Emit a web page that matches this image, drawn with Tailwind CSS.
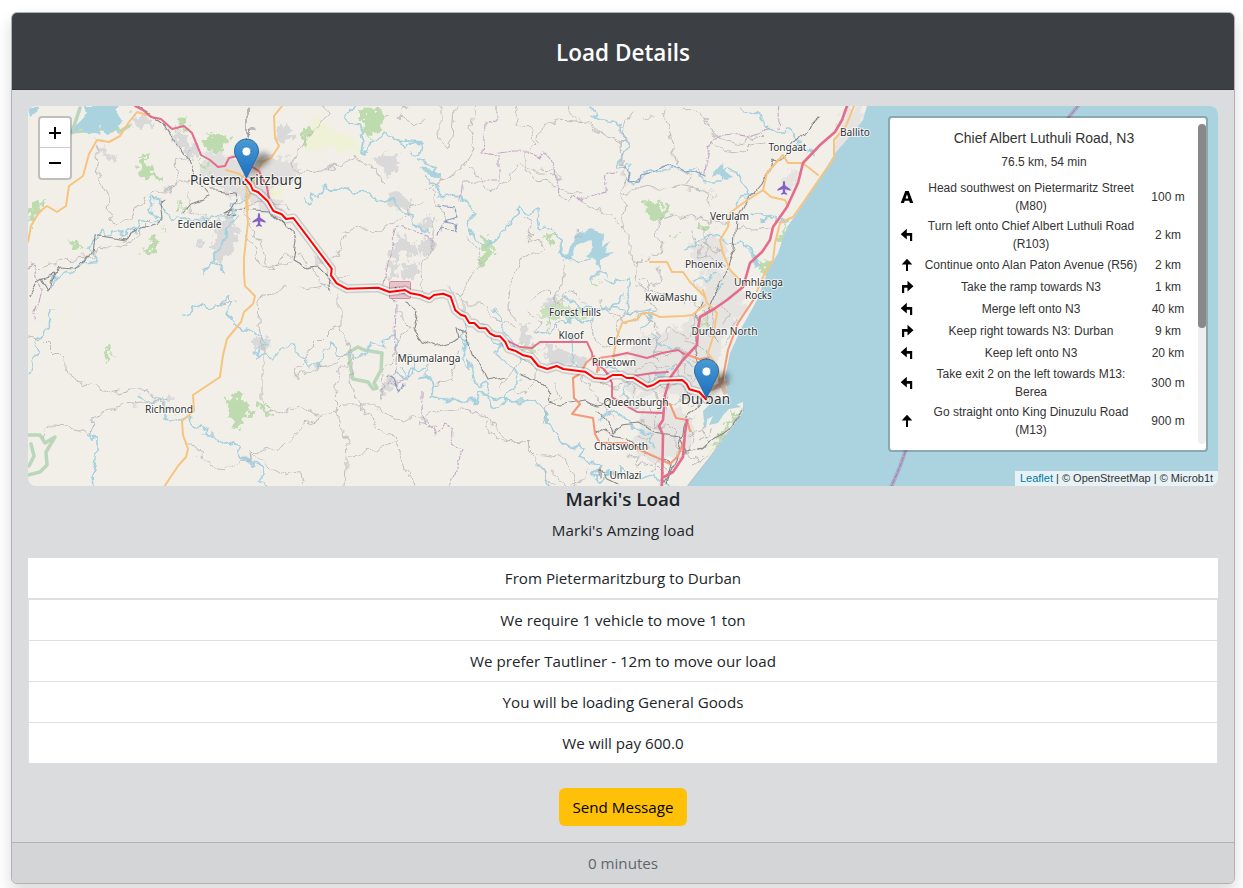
<!DOCTYPE html>
<html lang="en">
<head>
<meta charset="utf-8">
<title>Load Details</title>
<script src="https://cdn.jsdelivr.net/npm/@tailwindcss/browser@4"></script>
</head>
<body class="bg-white h-[888px] overflow-hidden px-[8px] pt-3 pl-[11px] font-['Open_Sans',sans-serif] text-[15.150px] text-[#212529]">
<main class="flex flex-col w-[1224px] h-[872px] rounded-md border border-[#b0b2b4] bg-[#dadcde] overflow-hidden text-center shadow-[0_8px_16px_rgba(0,0,0,0.15)]">
  <header class="h-[77px] shrink-0 bg-[#3c4044] border-b border-[#33353d] flex items-center justify-center text-white font-semibold">
    <h1 class="text-[22.500px] leading-7 pt-[3px]">Load Details</h1>
  </header>
  <section class="px-4 pt-4 h-[752px] shrink-0">
    <div class="relative h-[380px] w-[1190px] rounded-lg overflow-hidden bg-[#f2efe9]">
      <svg class="block" width="1190" height="380" viewBox="28 106 1190 380" fill="none" stroke-linejoin="round" stroke-linecap="round">
        <defs>
          <linearGradient id="pinFill" x1="0" y1="0" x2="0" y2="1"><stop offset="0" stop-color="#4a9ad4"/><stop offset="1" stop-color="#1a6fc0"/></linearGradient>
          <filter id="soft" x="-50%" y="-50%" width="200%" height="200%"><feGaussianBlur stdDeviation="3"/></filter>
          <!-- natural irregularity for banks, tracks and woodland edges -->
          <filter id="wiggle" filterUnits="userSpaceOnUse" x="28" y="106" width="1190" height="380" color-interpolation-filters="sRGB"><feTurbulence type="fractalNoise" baseFrequency=".09" numOctaves="2" seed="4"/><feDisplacementMap in="SourceGraphic" scale="13" xChannelSelector="R" yChannelSelector="G"/></filter>
          <filter id="ragged" filterUnits="userSpaceOnUse" x="28" y="106" width="1190" height="380" color-interpolation-filters="sRGB"><feTurbulence type="fractalNoise" baseFrequency=".14" numOctaves="3" seed="9"/><feDisplacementMap in="SourceGraphic" scale="18" xChannelSelector="R" yChannelSelector="G"/></filter>
          <filter id="bend" filterUnits="userSpaceOnUse" x="28" y="106" width="1190" height="380" color-interpolation-filters="sRGB"><feTurbulence type="fractalNoise" baseFrequency=".06" numOctaves="2" seed="2"/><feDisplacementMap in="SourceGraphic" scale="10" xChannelSelector="R" yChannelSelector="G"/></filter>
          <g id="pin">
            <path d="M13 39 L22 17 Q37 10 35 22 Z" fill="#000" opacity=".45" filter="url(#soft)"/>
            <path d="M12.500 .5C5.800 .5 .5 5.800 .5 12.400c0 3 1.100 5.200 2.300 7.600L12.500 39.500 22.200 20c1.200-2.400 2.300-4.600 2.300-7.600C24.500 5.800 19.200 .5 12.500 .5Z" fill="url(#pinFill)" stroke="#2e6c97" stroke-width="1"/>
            <circle cx="12.500" cy="13" r="4.500" fill="#fff" stroke="#2f78b3" stroke-width=".7"/>
          </g>
          <path id="plane" d="M0 -7C1 -7 1.200 -5 1.200 -2.500L6.500 1.300V2.800L1.200 1.200V4.300L3 5.700V6.800L0 6 -3 6.800V5.700L-1.200 4.300V1.200L-6.500 2.800V1.300L-1.200 -2.500C-1.200 -5 -1 -7 0 -7Z" fill="#8461c4"/>
          <path id="route" d="M245.700 179.300l5 5.700 2 5 5.600 2.300 9.400 9 5.700 9.700 8.300 3.300 4.300 4.700 7.400 -1 38.300 50.700 -.7 6.600 5.700 8 10 5.400 31.600 -1 11 4.300 15.700 -2 5.700 3.300 9.300 1.700 9.300 3.700 4.700 -3.700 9.300 -1.300 7.400 3 4.600 13.600 5.400 4.400 4.600 1.600 4 6.700h5l5 5 6.700 .3 4 5 5 2.700 5 .3 5.300 5.700 3 6.700 6.700 2 8.300 4.600 7.700 1.700 7.300 9 9 3 9.400 -3 6.600 3 21.700 2.700 9.300 6.300 11.400 1 7 -4h9l5 3h6.600l14 8.700 6 -1.700 6.700 -4.300 22.300 -.7 4.400 4 2.600 5.300 10 2.700 6.700 7.300"/>
        </defs>

        <!-- built-up areas -->
        <g fill="#dad9d9" filter="url(#ragged)">
          <path d="M205 155l12 -6 14 9 20 -2 14 6 8 -7 18 3 10 10 -9 12 -14 4 -4 12 8 9 -6 9 -14 -5 -13 -10 -22 -4 -16 -14 -12 -6Z" opacity=".75"/>
          <path d="M172 130l14 3 6 12 8 8 -6 6 -12 -8 -8 -10ZM277 123l12 3 4 10 -12 8 -5 -9ZM132 115l12 -2 10 10 -12 5 -8 -4ZM96 141l9 8 11 8 -5 5 -12 -9ZM215 222l18 -6 4 14 -4 20 -12 14 -8 -2 1 -18ZM196 240h7v7h-6ZM374 159l14 -6 10 6 0 12 -8 4 -10 -5ZM385 196l12 -6 10 8 5 14 -12 -3 -10 -4Z"/>
          <path d="M398 236l8 -2 4 8 -8 12 -10 8 -2 -10ZM390 262l10 2 -4 14 -8 0ZM404 246l10 -4 4 10 -10 8ZM418 244l14 -8 6 8 -8 10 -10 2ZM402 266l16 -4 2 8 -8 12 -10 -6ZM420 224l10 -10 4 6 -4 12 -8 2ZM313 250l10 7 2 10 -9 -5Z"/>
          <path d="M254 336l15 3 0 11 -8 2 -8 -6ZM382 384l8 -9 6 3 -7 16 -7 -3ZM167 398l5 -2 1 5 -4 2ZM520 325l8 -3 1 14 5 10 -8 6 -7 -9ZM542 348l12 -3 20 13 -8 8 -18 -3ZM566 354l18 2 4 12 -18 -2ZM540 306l14 -12 8 8 -14 9ZM709 198l3 -5 4 5Z"/>
          <path d="M844 106l18 2 4 14 -12 14 -12 14 -8 2 4 -20ZM640 336l36 -6 28 -20 20 12 -4 32 -14 30 -18 16 -34 -8 -22 4 -12 -22ZM692 246l20 -12 16 12 -2 22 -18 6 -18 -8ZM700 280l24 -10 22 14 -2 30 -16 16 -22 -8ZM780 180l12 -10 10 4 -16 22ZM640 412l40 -4 18 20 -12 22 -24 12 -32 -12 8 -20Z" opacity=".5"/>
        </g>

        <!-- woods and reserves -->
        <g fill="#bddbae" filter="url(#ragged)">
          <path d="M139 156l9 -3 0 12 4 9 8 1 1 5 -12 -2 -12 -3 4 -7ZM176 125l7 -11 6 12 -9 4ZM203 138l10 -4 12 0 4 8 -8 12 -12 -4ZM196 160l8 2 7 8 -8 -1ZM363 110l16 -4 5 11 -3 15 -9 5 -9 -9ZM303 128l5 0 2 9 -7 10 -3 -6ZM28 203l19 -2 -9 12 -9 14ZM141 251l6 -3 9 -12 6 5 -7 9 -11 2ZM65 239l8 3 5 -1 6 8 -12 -2ZM162 226l3 2 2 5ZM177 201l6 4 2 5 -6 -2Z"/>
          <path d="M482 240l8 -5 2 12 -1 8 -8 10 -5 -1 5 -8ZM544 234l12 -3 -1 11 -8 3ZM644 200l5 1 12 3 12 11 -13 2 -6 2 -9 -4 2 -5ZM697 223l11 2 6 2 -8 6 -8 -5ZM228 401l12 -10 3 13 11 7 -9 5 -7 16 -9 -14ZM256 403l8 2 9 5 -4 5 -5 -5 -8 -2ZM104 349l5 1 2 10 5 -7 -3 7 -8 4ZM672 234c4 -2 6 2 1 4ZM757 264l10 -4 4 7 -8 9ZM592 280l9 3 -8 3ZM785 222l3 3 -8 17 -3 -1ZM730 420l10 -11 1 4 -28 37 -5 2Z"/>
          <path d="M548 307l14 -4 10 7 10 -3 6 7 -12 6 -12 -4 -16 5 -10 -4ZM520 344l14 3 2 7 -14 -4ZM695 316l14 4 3 10 -11 -5Z" opacity=".75"/>
        </g>
        <g filter="url(#ragged)"><path d="M312 115l14 10 20 10 16 8 -5 14 -12 -6 -18 -5 -25 9 4 -15ZM270 190l10 -4 1 9 -9 4ZM707 449l8 -6 -2 7 -7 5ZM63 315l6 -5 3 4 -7 5Z" fill="#eef3d2" opacity=".8"/></g>
        <g stroke="#6fb57c" stroke-opacity=".42" stroke-width="3.500">
          <path d="M80 108l-4 12 -4 12 11 -1 8 0 15 -3 3 -8 3 11 5 -4 2 5 10 -6" />
          <path d="M349 352l9 -5 6 3 18 3 -1 17 -7 13 3 5 -4 1 -5 -7 -15 -3 -2 -9Z"/>
          <path d="M28 435l12 0 5 8 10 -6 -9 15 1 13 -7 7 -12 3M31 444l3 12 -5 10"/>
        </g>

        <!-- sea, dams and bay -->
        <path d="M867 106l-4 14 -10 13 -18 20 -15 25 -23 35 -10 14 -9 26 -10 17 -6 17 -5 13 -15 27 -12 26 -5 24 3 20 7 8 8 -3 0 10 -13 18 -20 27 -23 29H1218V106Z" fill="#aad3df"/>
        <g fill="#aad3df" filter="url(#bend)">
          <path d="M86 106l2 8 -14 12 -3 9 10 -6 7 4 12 2 2 -12 5 10 10 -3 6 -9 -6 -10 5 -5ZM28 106h12l-1 6 -9 4Z"/>
          <path d="M575 236l14 -6 14 4 -1 12 8 -7 -7 15 10 -1 -12 8 0 9 -6 -10 -7 -4 6 -9 -4 -8 -13 6 -4 10 -6 5 -9 -7 -1 -12 6 13 6 -1ZM420 168l20 3 0 7 -15 -6ZM715 172l7 -9 3 12 6 4 -7 2 -5 -5 -6 2Z"/>
          <path d="M749 253l7 3 6 9 -6 2Z"/>
        </g>
        <path d="M703 411l12 -12 15 1 11 7 -12 2 -5 5 -6 9 -9 2 4 -9 -9 5ZM703 424l5 -10 -2 14Z" fill="#aad3df"/>
        <path d="M744 407l-14 22 -20 28 -22 28" stroke="#c0b9c4" stroke-width=".8"/>
        <g stroke="#a996bd" stroke-width="4" opacity=".6"><path d="M1078 106l-14 17M907 446q-6 20 -16 41"/></g>
        <path d="M1078 106l-14 17M907 446q-6 20 -16 41" stroke="#a777a7" stroke-width="1" stroke-dasharray="4 2"/>

        <!-- rivers -->
        <g stroke="#a5d0df" stroke-width="1.600" filter="url(#wiggle)">
          <path d="M50 289l5 -12 12 -8 8 1 6 -6 13 -1 2 -8 -5 -7 4 -10 9 -7 4 4 9 -4 7 3 8 -4 4 2 4 -12 11 3 8 -2 -2 -7 -8 -6 3 -10 9 2 -3 4 7 8 9 5 6 -1 12 6 12 -1 9 -4 12 1 8 -6 -2 -5 12 -5 7 -10 5 -12"/>
          <path d="M204 271l9 -11 7 -12 7 -16 10 -17M213 260l9 6 3 10" stroke-width="2"/>
          <path d="M355 106l-7 8 2 9 9 6 4 11 -2 13 6 1 5 -13 15 -6 11 3 6 11 9 -7 11 2M400 142l5 -2 15 1 3 6 -3 7 -10 -1M420 160l12 6 4 7M427 176l9 11 5 12 11 -3 12 1 5 10 5 7 -6 8 3 10 6 7 8 9 7 -8 12 -8 10 -14 6 -10 8 5 10 -2 3 15 13 4 5 13 2 10 14 10 16 -5M304 195l5 12 4 -12 7 3 4 -10 13 3 8 -3 10 7 12 -2 10 9 13 -2 9 9 12 7 6 11 10 6" stroke-width="1.800"/>
          <path d="M603 279l10 6 14 -6 3 6 -5 14 6 15M588 106l4 8 10 5 8 3 11 1 1 18 7 5 -7 10 -3 12 11 -2 -4 12 10 6 8 -9 7 0 12 -6 11 -1 12 5 10 -2 9 11 16 0 6 -12 9 1 7 13 8 8 -3 5 -7 1 -5 8M738 106l6 8 9 -1 7 4 7 11 11 4 7 -3 12 8 2 9 14 8"/>
          <path d="M753 214l12 4 -3 4 11 -6 2 6 12 -1M684 252l10 -5 6 -8 9 -4 11 1 11 8 10 -2 12 12 6 9M693 282l6 -4 8 2 9 -7 5 1M722 285l-8 4"/>
          <path d="M53 308l-6 18 -8 15 -6 22 -4 14M183 315l9 -1 8 -10 8 5 12 -4 8 -8 2 7 -4 8 8 9 6 9 12 2 9 4 6 8 -8 5 -4 9 10 -5 10 3 8 -7 10 -2 6 9 10 9 12 1 5 -15 5 -8 8 3 -3 9 8 1 5 -3 7 7 5 -3 8 -5 2 -10 9 5 5 2 -3 -8 10 -4 5 5 -3 8 8 8 9 -4 6 12 -3 7 -7 3 -5 -8"/>
          <path d="M140 397l4 4 10 0 5 -3 5 5 0 15 10 3 8 -4 7 2 3 6 10 -1 6 5 -4 5 10 0 8 8 8 -2 9 10 6 11 10 4 7 5 -4 9 6 6 12 4M91 422l0 11 5 6 0 20 -3 18 1 10"/>
          <path d="M398 374l9 3 5 -8 10 1 5 -4 -2 9M464 326l-2 10 5 9 -4 16 5 11 0 -13 5 20 8 8 5 -6 3 14 2 13 12 -2 3 -11 13 -12 -1 -10 -10 -9 -12 -10 4 -9 -5 -8 -3 -7 -10 -6"/>
          <path d="M420 378l10 -1 4 8 -4 9 9 7 10 -4 13 5 15 -1 2 -8 12 2 16 6 20 -1 14 4 5 8 0 14 9 5 8 6 5 12 12 -4 6 5 -7 9 10 5 6 -4 8 5 -10 10 8 6 12 -9 8 3 0 -8 9 6 14 5 8 -4 10 10 12 4" stroke-width="1.900"/>
          <path d="M590 280l9 -9 8 5M566 298l9 9 13 -1 8 5 11 -4 13 1 12 6 20 -5M535 331l10 2 11 -9 10 -1 10 -6 5 6 13 -4M642 328l9 -7 -2 -8 6 -2M650 333l15 14 12 3 9 12 15 6 10 7M622 292l-3 12 -12 6"/>
          <path d="M495 310l10 13 -3 11 13 10 3 15M600 420l12 -10 14 8 8 12 14 4 6 12M604 362l14 10 9 12 -5 12 10 8M644 386l10 -12 12 0 9 -10 8 2M570 338l4 12 -4 12 8 4M538 466l8 8 5 12"/>
        </g>

        <!-- minor roads -->
        <g stroke="#b9b8b9" stroke-width=".9" filter="url(#wiggle)">
          <path d="M95 145l3 30 11 20 -1 17 6 14 18 -9 5 -13 28 -15 26 -8M28 260l12 8 14 -2 10 -7 30 -3 6 -10 22 3 10 -7 10 -14 8 -8M190 194l0 18 20 8M168 190l10 -6 -3 -22 20 -12M325 106l2 8 -16 20 -14 18 -6 12 9 10 20 -4 24 -7 10 -8 14 11 10 4 4 13M344 232l10 -3 20 2 22 -8 14 -16 14 -3M333 260l15 -27M405 108l-5 12 7 3 18 -1M440 106l0 30 7 16 6 -14 2 -32M474 106l-4 22 4 10 -8 25 -5 10 -22 8 -12 8M469 170l10 8 10 14 12 -10 9 -4 8 -16 10 5 8 5 12 0 12 7 -6 -10 -12 -1M512 106l6 20 13 5 6 12 -10 9 0 18 8 10 14 2 14 10 15 1M540 142l1 -14 18 -8 30 2 16 15 16 7M568 106l4 8 10 6 22 16M633 112l-9 14 -3 20 3 40 -2 12 4 8 -4 18 8 14 0 14 8 17M651 117l-8 1M663 106l5 22 8 36 16 14 -7 8M686 108l20 10 6 16 12 6 20 4 14 -9 10 -10M712 141l11 9 18 3 8 -8 16 -2"/>
          <path d="M580 200l22 11 16 12 4 4M585 235l-10 -2M622 196l16 -9 20 1 26 -1 22 4 3 12M650 255l8 1 6 -15 -10 -6 6 -16 16 -3 22 3 20 5 18 -8M520 222l6 -6 8 10 -6 18 10 -6 6 10 -20 8 -14 30 -4 20 10 12M562 260l2 22 -10 18 -8 30M466 235l18 26 -16 20 -8 18M433 190l4 16 9 10 -4 14M433 218l0 28 -12 20 1 26 12 6M450 284l15 20 0 12M640 255l-4 22 12 20 10 14"/>
          <path d="M28 337l13 2 20 20 15 22 20 5 12 7 24 -4 18 2 10 13 14 8M42 436l8 -10 20 1 20 9 1 -20 30 -10 30 -3 18 -4M186 442l17 14 3 8 21 6 15 -10 7 2 0 -9 35 -6 17 -18 20 -14 14 -3 6 -6 30 0 22 12 30 2 15 6M249 462l-1 -9 9 6 12 9 14 9 4 -5 15 1 2 11M340 291l0 36 10 26 3 40 16 24 24 22 15 32 14 25M260 302l-1 22 3 20 0 60 15 10 24 -9 17 10M340 326l-11 4 -18 18 -12 20 -2 10 14 -9 25 -6 15 -15M336 416l-1 -30 14 -30M381 403l3 -30 9 -22 15 -26 -10 -14M345 486l2 -43 -8 -20 -3 -10M348 462l12 -10 16 -1 18 -10M300 286l12 2 20 -4 16 -10M328 292l-16 -20 -10 -20 -20 13 -20 2 -15 -32M290 254l-22 18 -5 -24 -12 -22 -8 -18 22 -10 25 12M235 302l-20 3M258 304l10 -8 18 -8 0 -4"/>
          <path d="M420 424l15 -12 30 -3 22 7 18 24 20 2 12 20 18 24M487 420l2 14 12 6 22 1M525 442l12 12 30 4 8 28M550 470l18 16 12 -4 8 -12M460 352l-10 28 -14 4M500 388l20 -30 16 6 0 18 -12 12 -8 -6M515 325l-20 -5 -15 -18 -20 0M530 300l16 -8 10 10 20 -12 8 14M555 385l4 12 -12 10 -4 18M590 320l10 24 12 4 8 -8 -6 -18 12 -9 18 2 12 9 2 20 -6 8 14 4 8 -8 12 6M600 300l8 14 20 10 16 -10 18 16M645 346l6 -8 12 4 6 -14 20 10 8 -9 -6 -15"/>
          <path d="M638 374l8 -12 14 6 -6 12 14 9 14 -6 5 12 15 2M660 368l14 -4 12 2 4 12M684 340l16 6 8 12 -8 18 -10 4M640 420l12 6 14 -2 10 10 0 22 12 -2 8 -18 -12 -12 10 -8M596 395l8 16 8 6M622 396l12 12 12 -4 10 12 -4 20 -10 8 4 12M690 296l12 14 6 18 8 10M712 310l4 30M735 320l-8 28M688 435l14 -6 8 14M678 452l22 8M630 452l8 14 14 -2 10 10M694 234l6 14 -2 12 12 -4 14 10M704 230l0 30M712 234l-10 10 22 10M640 276l12 14 10 10 14 -4 8 10M638 262l8 -4M735 228l8 -2 10 4 16 -2"/>
          <path d="M636 284l14 6 12 -8 -4 -14M644 302l14 -10 16 4M600 384l14 4 10 -6 12 6 -4 12M652 390l6 10 14 4 12 -6M668 396l-2 14M690 386l-4 14 10 8M690 358l12 4 6 -8M676 362l4 14M636 436l12 4 -4 14M606 436l8 8 14 2M648 470l12 -6 10 6M700 440l14 -10M692 466l16 -14M722 300l6 14 -4 12M700 330l10 6M658 344l-6 10 8 8M530 312l10 8 -4 12M556 326l10 10M584 372l-2 10 12 8"/>
        </g>

        <!-- municipal boundaries -->
        <g stroke="#c3a8c6" stroke-width="1.100" stroke-dasharray="7 2 1.500 2" filter="url(#bend)">
          <path d="M28 267l6 -3 2 12 7 14 -5 15 -4 13M383 284l6 -30 8 -28 30 8 8 6M497 106l0 12 -12 6 -2 30 16 2 0 25 -37 0 -3 20M499 153l14 -2 14 0 12 7 6 -6 10 12 4 30 10 8 6 -10 8 8 20 -8 2 -16 14 -4M703 172l5 -28 9 -7 15 -3 15 2 22 -9M780 106l-2 24M392 294l5 12 -2 60 -5 20 20 -8M422 394l0 14 4 14 10 12 8 -8 8 4 -1 13 11 6 -8 25 -6 15"/>
        </g>

        <!-- railways -->
        <g stroke="#88888a" stroke-width="1.100" filter="url(#bend)">
          <path d="M138 106l25 18 12 18 14 20 8 22 10 12M209 190l10 0 8 1 8 1 2 8 -4 8 -8 4 10 -3 -8 5 10 2M238 210l30 2 6 4 20 17 2 11 -3 16 14 8 10 -2 10 10 3 12M247 136l0 -30M248 134l3 -4 6 0M28 298l8 -16 17 -7 -4 16 -7 -12M407 300l10 12 -4 16 10 14 12 5 18 -5 6 -4 -2 -11 9 5 9 26 12 23 18 -4M520 373l16 7 15 12 -3 9 13 4 24 -5 14 5 16 -5M597 430l12 5 20 3 22 18 20 7 -5 21M597 410l9 10 7 14 9 -8 16 -2 16 8 26 4 7 16"/>
          <path d="M705 396l-18 22 -10 40 -14 26M684 453l15 -4 10 -9 15 -8 8 -6 10 -16M820 116l-12 12 -13 16 -14 17 -8 -2 -12 24 -18 22 -7 14 -2 30 -6 12 -2 12 -12 20 -8 20M702 302l-6 14 0 34 6 18M184 213l8 -9 16 -6M165 200l-6 2 2 16 -6 6 -25 9 -6 6 -24 -4 -6 2 -2 16 -6 8 -14 8 -12 -1 -10 14M600 478l0 -10 6 10 12 6"/>
        </g>
        <g filter="url(#bend)"><path d="M440 206l12 2 4 8 -10 4 12 2 -3 8 -12 -2 -4 8M624 168l7 6 -2 8 10 -1 2 -6 12 -4 12 -6 8 2 11 5 12 -2 8 4M388 375l6 3 5 14 4 -8" stroke="#8b9cbf" stroke-width="1.200"/></g>

        <!-- secondary roads -->
        <g stroke="#f7c47f" stroke-width="2">
          <path d="M28 242l3 -16 8 -14 8 -6 10 6 9 -6 3 -20 14 -10 6 -22 8 -14 12 2 11 -6 9 -14 8 -10 14 4M282 106l-8 10 1 22 4 8 -8 12 -9 4 -6 12 -3 16 -7 12 2 20 -4 36 0 16 1 12 10 10 -2 8 -9 8 -3 10 -14 17 -4 16 -3 22 -12 8 -15 10 1 16 -12 10 1 14 5 14 -2 8 -8 9 -16 24 -2 10M226 170l14 4 6 8 2 28"/>
          <path d="M854 106l-8 20 -12 14 0 18 -14 20 -13 19 -14 20 -13 6 -5 20 -2 17 -10 17 -6 14M783 155l-16 18 -4 17 -20 13 -13 10 -2 14 -8 13 3 13 7 17 13 13M783 155l5 8h15l15 12M763 190l8 7 14 3 3 6M650 262h17l5 10 11 0 7 10 15 15M703 290l4 13 10 10 -4 24 -5 16 10 14 2 20M705 305l-13 10 -8 1 -24 1 -9 -4 -8 0 -6 6 -15 4 -5 14 -4 22"/>
        </g>
        <path d="M599 370l-5 -14 -8 7 -5 10 -8 5 1 20 6 6 -8 10 21 4 2 16 5 9 26 0 14 7 20 9 10 5 8 -8 6 -15M599 362l-2 10M599 358l20 -3M690 431l-3 -11 -11 -2 -6 -14 -9 -2M682 353l17 6 10 -1M756 296l-18 27 -10 27 -6 33 -12 8" stroke="#f49a79" stroke-width="2.100"/>
        <path d="M721 380l4 12M713 388l14 -5" stroke="#c9a88f" stroke-width="5" opacity=".7"/>

        <!-- motorways -->
        <g stroke="#e46d8b" stroke-width="2">
          <path d="M135 106l8 4 8 7 10 2 11 10 12 -3 8 7 9 22 9 5 8 7 7 -1 4 -8 12 -3 8 10 10 6 8 16 2 12"/>
          <path d="M508 341l12 6 12 1 8 -6 47 0 5 11 1 9 12 8 7 13 0 14 25 15 25 1M613 356l14 -3 20 5 15 -5 16 -3 6 4M633 376l20 -3 15 -1M604 370l6 6M637 412l-14 -8" stroke-width="1.900"/>
          <path d="M847 106l-5 14 -7 12 -15 13 -17 18 -5 20 -11 24 -14 20 -3 13 -8 12 -12 11 -7 24 -16 13 -13 9 -14 8 -2 12 -1 16 -15 16 -12 17 -5 17 -2 25 -4 6 4 9 -1 50 -5 9M687 420l-2 13 -2 24 -10 15 -11 6" stroke-width="2.600"/>
        </g>
        <rect x="389.500" y="281.500" width="21" height="17" rx="1" fill="#eac2cb" stroke="#cc919e"/>
        <text x="400" y="293.500" font-family="'Noto Sans', sans-serif" font-size="9" text-anchor="middle" fill="#7d4a55">N3</text>

        <use href="#plane" x="259" y="220"/>
        <use href="#plane" x="784" y="188"/>

        <!-- place names -->
        <g font-family="'Noto Sans', sans-serif" font-size="10.200" fill="#333" stroke="#fff" stroke-opacity=".7" stroke-width="2" paint-order="stroke" text-anchor="middle">
          <text x="246" y="185" font-size="13.500" textLength="112">Pietermaritzburg</text>
          <text x="199.500" y="227.500" textLength="44">Edendale</text>
          <text x="169" y="412.500" textLength="48">Richmond</text>
          <text x="429" y="362" textLength="63">Mpumalanga</text>
          <text x="787.500" y="150.500" textLength="38">Tongaat</text>
          <text x="855" y="136" textLength="30">Ballito</text>
          <text x="729.500" y="220" textLength="39">Verulam</text>
          <text x="704" y="268" textLength="38">Phoenix</text>
          <text x="758.500" y="286" textLength="49">Umhlanga</text>
          <text x="758.500" y="298.500" textLength="27">Rocks</text>
          <text x="671" y="301" textLength="52">KwaMashu</text>
          <text x="575" y="316" textLength="52">Forest Hills</text>
          <text x="571" y="338.500" textLength="25">Kloof</text>
          <text x="629" y="345" textLength="44">Clermont</text>
          <text x="724.500" y="334.500" textLength="66">Durban North</text>
          <text x="614" y="365.500" textLength="44">Pinetown</text>
          <text x="636" y="405.500" textLength="65">Queensburgh</text>
          <text x="705.500" y="404" font-size="13.500" textLength="49">Durban</text>
          <text x="621" y="450" textLength="54">Chatsworth</text>
          <text x="625.500" y="479" textLength="32">Umlazi</text>
        </g>

        <!-- calculated route -->
        <use href="#route" stroke="#000" stroke-opacity=".15" stroke-width="9"/>
        <use href="#route" stroke="#fff" stroke-opacity=".8" stroke-width="6"/>
        <use href="#route" stroke="#f00" stroke-width="2"/>
        <use href="#pin" x="234" y="138.500"/>
        <use href="#pin" x="694" y="358.500"/>
      </svg>

      <!-- zoom control -->
      <div class="absolute left-[10px] top-[10px] w-[34px] h-[64px] rounded border-2 border-black/20 bg-white bg-clip-padding flex flex-col">
        <button class="h-[30px] border-b border-[#ccc] grid place-items-center"><svg width="12" height="12" viewBox="0 0 12 12"><path d="M0 6h12M6 0v12" stroke="#000" stroke-width="2"/></svg></button>
        <button class="h-[30px] grid place-items-center"><svg width="12" height="12" viewBox="0 0 12 12"><path d="M0 6h12" stroke="#000" stroke-width="2"/></svg></button>
      </div>

      <!-- itinerary -->
      <aside class="absolute left-[860px] top-[10px] w-[320px] h-[336px] rounded border-2 border-black/20 bg-white bg-clip-padding font-['Liberation_Sans',sans-serif] text-[12px] leading-[18px] text-[#333]">
        <h2 class="pt-3 text-[14px] leading-[17px] pl-1 pr-3">Chief Albert Luthuli Road, N3</h2>
        <h3 class="pt-[6px] leading-[18px] pl-1 pr-3">76.5 km, 54 min</h3>
        <div class="mt-[6.500px] pl-[7px] grid grid-cols-[20px_228px_46px]">
          <div class="col-span-3 grid grid-cols-subgrid items-center h-[38px]"><svg class="mx-auto" width="14" height="14" viewBox="0 0 14 14"><path fill-rule="evenodd" d="M.7 13 5.300 1h3.400L13.300 13H9.900L9.200 10.800H4.700L4 13ZM5.500 8.400h2.900L7 4.200Z"/></svg><span>Head southwest on Pietermaritz Street<br>(M80)</span><span>100 m</span></div>
          <div class="col-span-3 grid grid-cols-subgrid items-center h-[38px]"><svg class="mx-auto" width="14" height="14" viewBox="0 0 14 14"><path d="M.7 6.300 6.800 .8V5H12.200v8H10V7.800H6.800V11.500Z"/></svg><span>Turn left onto Chief Albert Luthuli Road<br>(R103)</span><span>2 km</span></div>
          <div class="col-span-3 grid grid-cols-subgrid items-center h-[22px]"><svg class="mx-auto" width="14" height="14" viewBox="0 0 14 14"><path d="M7 .8 12.300 6.500H8V13H6V6.500H1.700Z"/></svg><span>Continue onto Alan Paton Avenue (R56)</span><span>2 km</span></div>
          <div class="col-span-3 grid grid-cols-subgrid items-center h-[22px]"><svg class="mx-auto" width="14" height="14" viewBox="0 0 14 14"><path d="M13.500 6.300 7.500 .8V5H2v8H4.200V7.800H7.500V11.500Z"/></svg><span>Take the ramp towards N3</span><span>1 km</span></div>
          <div class="col-span-3 grid grid-cols-subgrid items-center h-[22px]"><svg class="mx-auto" width="14" height="14" viewBox="0 0 14 14"><path d="M.7 6.300 6.800 .8V5H12.200v8H10V7.800H6.800V11.500Z"/></svg><span>Merge left onto N3</span><span>40 km</span></div>
          <div class="col-span-3 grid grid-cols-subgrid items-center h-[22px]"><svg class="mx-auto" width="14" height="14" viewBox="0 0 14 14"><path d="M13.500 6.300 7.500 .8V5H2v8H4.200V7.800H7.500V11.500Z"/></svg><span>Keep right towards N3: Durban</span><span>9 km</span></div>
          <div class="col-span-3 grid grid-cols-subgrid items-center h-[22px]"><svg class="mx-auto" width="14" height="14" viewBox="0 0 14 14"><path d="M.7 6.300 6.800 .8V5H12.200v8H10V7.800H6.800V11.500Z"/></svg><span>Keep left onto N3</span><span>20 km</span></div>
          <div class="col-span-3 grid grid-cols-subgrid items-center h-[38px]"><svg class="mx-auto" width="14" height="14" viewBox="0 0 14 14"><path d="M.7 6.300 6.800 .8V5H12.200v8H10V7.800H6.800V11.500Z"/></svg><span>Take exit 2 on the left towards M13:<br>Berea</span><span>300 m</span></div>
          <div class="col-span-3 grid grid-cols-subgrid items-center h-[38px]"><svg class="mx-auto" width="14" height="14" viewBox="0 0 14 14"><path d="M7 .8 12.300 6.500H8V13H6V6.500H1.700Z"/></svg><span>Go straight onto King Dinuzulu Road<br>(M13)</span><span>900 m</span></div>
        </div>
        <div class="absolute right-0 top-[6px] w-2 h-[320px] rounded-sm bg-[#eee]"><div class="h-[204px] rounded-sm bg-[#888]"></div></div>
      </aside>

      <div class="absolute right-0 bottom-0 h-[15px] w-[203px] bg-white/70 font-['Liberation_Sans',sans-serif] text-[11px] leading-[15px] text-[#333] whitespace-nowrap"><a class="text-[#0078a8]">Leaflet</a> | © OpenStreetMap | © Microb1t</div>
    </div>

    <h2 class="text-[18.800px] leading-6 pt-px font-semibold">Marki's Load</h2>
    <p class="mt-[7px] leading-6 tracking-[0.080px]">Marki's Amzing load</p>
    <ul class="mt-[16px]">
      <li class="h-[40px] leading-[40px] bg-white">From Pietermaritzburg to Durban</li>
      <li class="border-t-2 border-x border-[#dedfdf] h-[42px] leading-[40px] bg-white">We require 1 vehicle to move 1 ton</li>
      <li class="border-t border-x border-[#dedfdf] h-[41px] leading-[40px] bg-white">We prefer Tautliner - 12m to move our load</li>
      <li class="border-t border-x border-[#dedfdf] h-[41px] leading-[40px] bg-white">You will be loading General Goods</li>
      <li class="border-t border-x border-[#dedfdf] h-[41px] leading-[40px] bg-white">We will pay 600.0</li>
    </ul>
    <button class="mt-[25px] block mx-auto w-32 h-[38px] rounded-md bg-[#ffc107] text-black">Send Message</button>
  </section>
  <footer class="grow border-t border-[#b0b2b4] bg-[#d3d5d6] text-[#5f666c] leading-[40px]">0 minutes</footer>
</main>
</body>
</html>
